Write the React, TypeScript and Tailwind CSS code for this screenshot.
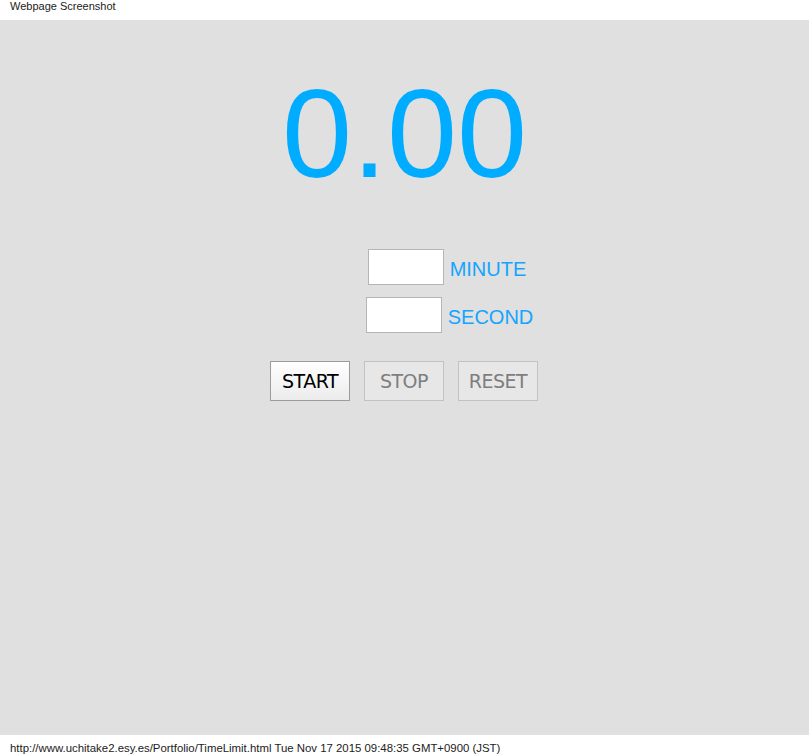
export default function App() {
  return (
    <div className="flex h-[754px] w-full flex-col bg-white font-['Liberation_Sans',Arial,sans-serif]">
      <header className="h-[20px] shrink-0 bg-white pl-[10px] pt-[1px] text-[11px] leading-[11px] text-[#222]">Webpage Screenshot</header>

      <main className="flex h-[715px] shrink-0 flex-col items-center bg-[#e0e0e0] pt-[51px]">
        <div className="h-[126px] text-[126px] leading-[126px] text-[#00acff]">0.00</div>

        <div className="mt-[52px] flex flex-col items-center gap-[12px]">
          <label className="flex items-center gap-[6px] pl-[85px]">
            <input className="h-[36px] w-[76px] border border-[#b5b5b5] bg-white outline-none" />
            <span className="mt-[4px] text-[20px] text-[#13a5ff]">MINUTE</span>
          </label>
          <label className="flex items-center gap-[6px] pl-[90px]">
            <input className="h-[36px] w-[76px] border border-[#b5b5b5] bg-white outline-none" />
            <span className="mt-[4px] text-[20px] text-[#13a5ff]">SECOND</span>
          </label>
        </div>

        <div className="mt-[28px] flex gap-[14px] pr-[1px] font-['DejaVu_Sans',sans-serif] text-[19px] tracking-[-0.5px]">
          <button className="h-[40px] w-[80px] border border-[#9c9c9c] bg-gradient-to-b from-white to-[#ececec] text-black">START</button>
          <button disabled className="h-[40px] w-[80px] border border-[#c2c2c2] bg-[#e7e7e7] text-[#7e7e7e]">STOP</button>
          <button disabled className="h-[40px] w-[80px] border border-[#c2c2c2] bg-[#e7e7e7] text-[#7e7e7e]">RESET</button>
        </div>
      </main>

      <footer className="h-[19px] shrink-0 bg-white pl-[10px] pt-[8px] text-[11.4px] leading-[11px] text-[#222]">
        http://www.uchitake2.esy.es/Portfolio/TimeLimit.html Tue Nov 17 2015 09:48:35 GMT+0900 (JST)
      </footer>
    </div>
  );
}
